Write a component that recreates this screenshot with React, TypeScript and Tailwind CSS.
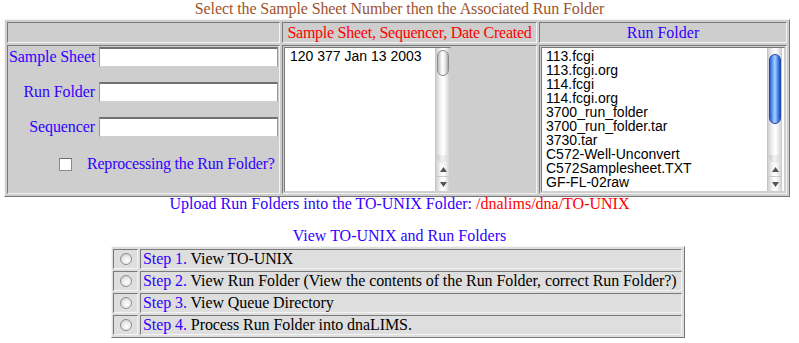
import React from "react";

const serif = "font-['Liberation_Serif','Times_New_Roman',serif]";
const sans = "font-['Liberation_Sans',Arial,sans-serif]";

const inset =
  "border border-t-[#7a7a7a] border-l-[#7a7a7a] border-b-[#f4f4f4] border-r-[#f4f4f4]";

function Arrow({ up }: { up: boolean }) {
  return (
    <svg width="9" height="7" viewBox="0 0 9 7">
      {up ? <path d="M4.5 1 L8 6 L1 6 Z" fill="#555" /> : <path d="M1 1 L8 1 L4.5 6 Z" fill="#555" />}
    </svg>
  );
}

function Scrollbar({ blue }: { blue: boolean }) {
  return (
    <div className="flex h-full w-[15px] flex-col border-l border-[#c4c4c4] bg-[linear-gradient(to_right,#d0d0d0,#f6f6f6_35%,#ffffff_55%,#e4e4e4_80%,#c8c8c8)]">
      <div className="flex flex-1 flex-col px-[1px] pt-[1px]">
        {blue ? (
          <div className="mt-[5px] h-[70px] rounded-full border border-[#2445a8] bg-[linear-gradient(to_right,#2d5fd4,#7fb4ff_35%,#a9d0ff_50%,#4f8ff0_75%,#1f4cc0)]" />
        ) : (
          <div className="mt-[1px] h-[26px] rounded-full border border-[#8c8c8c] bg-[linear-gradient(to_right,#b8b8b8,#f4f4f4_35%,#ffffff_50%,#e0e0e0_75%,#a8a8a8)]" />
        )}
        <div className="flex-1" />
        <div className="h-[8px] rounded-b-full bg-[linear-gradient(to_right,#c8c8c8,#f2f2f2_45%,#d8d8d8)]" />
      </div>
      <div className="flex h-[14px] items-center justify-center border-b border-[#c8c8c8]">
        <Arrow up />
      </div>
      <div className="flex h-[14px] items-center justify-center">
        <Arrow up={false} />
      </div>
    </div>
  );
}

function Radio() {
  return (
    <div className="h-[12px] w-[12px] rounded-full border border-[#8e8e8e] bg-[radial-gradient(circle_at_60%_65%,#ffffff,#e6e6e6_55%,#b4b4b4)]" />
  );
}

function TextField() {
  return (
    <div className="h-[20px] w-[179px] border border-[#9a9a9a] border-t-2 border-t-[#707070] border-b-[#d0d0d0] bg-white" />
  );
}

const folders = [
  "113.fcgi",
  "113.fcgi.org",
  "114.fcgi",
  "114.fcgi.org",
  "3700_run_folder",
  "3700_run_folder.tar",
  "3730.tar",
  "C572-Well-Unconvert",
  "C572Samplesheet.TXT",
  "GF-FL-02raw",
];

const steps = [
  ["Step 1.", " View TO-UNIX"],
  ["Step 2.", " View Run Folder (View the contents of the Run Folder, correct Run Folder?)"],
  ["Step 3.", " View Queue Directory"],
  ["Step 4.", " Process Run Folder into dnaLIMS."],
];

export default function App() {
  return (
    <div className={`h-[343px] w-[799px] overflow-hidden bg-white text-[16px] ${serif}`}>
      <div className="h-[19px] whitespace-nowrap text-center leading-[18px] tracking-[-0.1px] text-[#a0522d]">
        Select the Sample Sheet Number then the Associated Run Folder
      </div>

      <div className="ml-[4px] w-[786px] border border-t-[#f4f4f4] border-l-[#f4f4f4] border-r-[#777] border-b-[#777] bg-[#cecece]">
        <div className="grid grid-cols-[273px_255px_1fr] grid-rows-[21px_149px] gap-[2px] p-[2px]">
          <div className={inset} />
          <div className={`${inset} overflow-hidden whitespace-nowrap text-center leading-[19px] tracking-[-0.25px] text-[#ff0000]`}>
            Sample Sheet, Sequencer, Date Created
          </div>
          <div className={`${inset} text-center leading-[19px] text-[#3300ff]`}>Run Folder</div>

          <div className={`${inset} p-[1px]`}>
            <div className="flex flex-col gap-[15px] text-[#3300ff]">
              {["Sample Sheet", "Run Folder", "Sequencer"].map((l) => (
                <div key={l} className="flex h-[20px] items-center">
                  <div className="w-[86px] whitespace-nowrap text-right leading-[18px] tracking-[-0.1px]">{l}</div>
                  <div className="ml-[4px]">
                    <TextField />
                  </div>
                </div>
              ))}
              <div className="flex h-[24px] items-center">
                <div className="ml-[50px] h-[13px] w-[13px] shrink-0 border border-[#8a8a8a] border-t-[#6a6a6a] bg-white" />
                <div className="ml-[15px] whitespace-nowrap leading-[18px] tracking-[-0.2px]">Reprocessing the Run Folder?</div>
              </div>
            </div>
          </div>

          <div className={`${inset} p-[1px]`}>
            <div className="flex h-full w-[167px] border border-[#7a7a7a] border-b-[#cfcfcf] border-r-[#cfcfcf] bg-white">
              <div className={`flex-1 overflow-hidden whitespace-nowrap pl-[5px] pt-[1px] text-[14px] leading-[14px] text-black ${sans}`}>
                120 377 Jan 13 2003
              </div>
              <Scrollbar blue={false} />
            </div>
          </div>

          <div className={`${inset} p-[1px]`}>
            <div className="flex h-full border border-[#7a7a7a] border-b-[#cfcfcf] border-r-[#cfcfcf] bg-white pr-[2px]">
              <div className={`flex-1 overflow-hidden whitespace-nowrap pl-[4px] pt-[1px] text-[14px] leading-[14px] text-black ${sans}`}>
                {folders.map((f) => (
                  <div key={f}>{f}</div>
                ))}
              </div>
              <Scrollbar blue />
            </div>
          </div>
        </div>
      </div>

      <div className="-mt-[2px] h-[18px] whitespace-nowrap text-center leading-[18px] text-[#3300ff]">
        Upload Run Folders into the TO-UNIX Folder: <span className="text-[#ff0000]">/dnalims/dna/TO-UNIX</span>
      </div>

      <div className="mt-[14px] h-[18px] text-center leading-[18px] text-[#3300ff]">View TO-UNIX and Run Folders</div>

      <div className="ml-[111px] mt-[1px] w-[574px] border border-t-[#f4f4f4] border-l-[#f4f4f4] border-r-[#777] border-b-[#777] bg-[#dedede] py-[2px] pl-[1px] pr-[2px]">
        <div className="flex flex-col gap-[2px]">
          {steps.map(([a, b]) => (
            <div key={a} className="flex h-[20px] gap-[2px]">
              <div className={`${inset} flex w-[25px] shrink-0 items-center pl-[6px]`}>
                <Radio />
              </div>
              <div className={`${inset} min-w-0 flex-1 overflow-hidden whitespace-nowrap pl-[2px] leading-[18px] tracking-[-0.08px] text-black`}>
                <span className="text-[#3300ff]">{a}</span>
                {b}
              </div>
            </div>
          ))}
        </div>
      </div>
    </div>
  );
}
